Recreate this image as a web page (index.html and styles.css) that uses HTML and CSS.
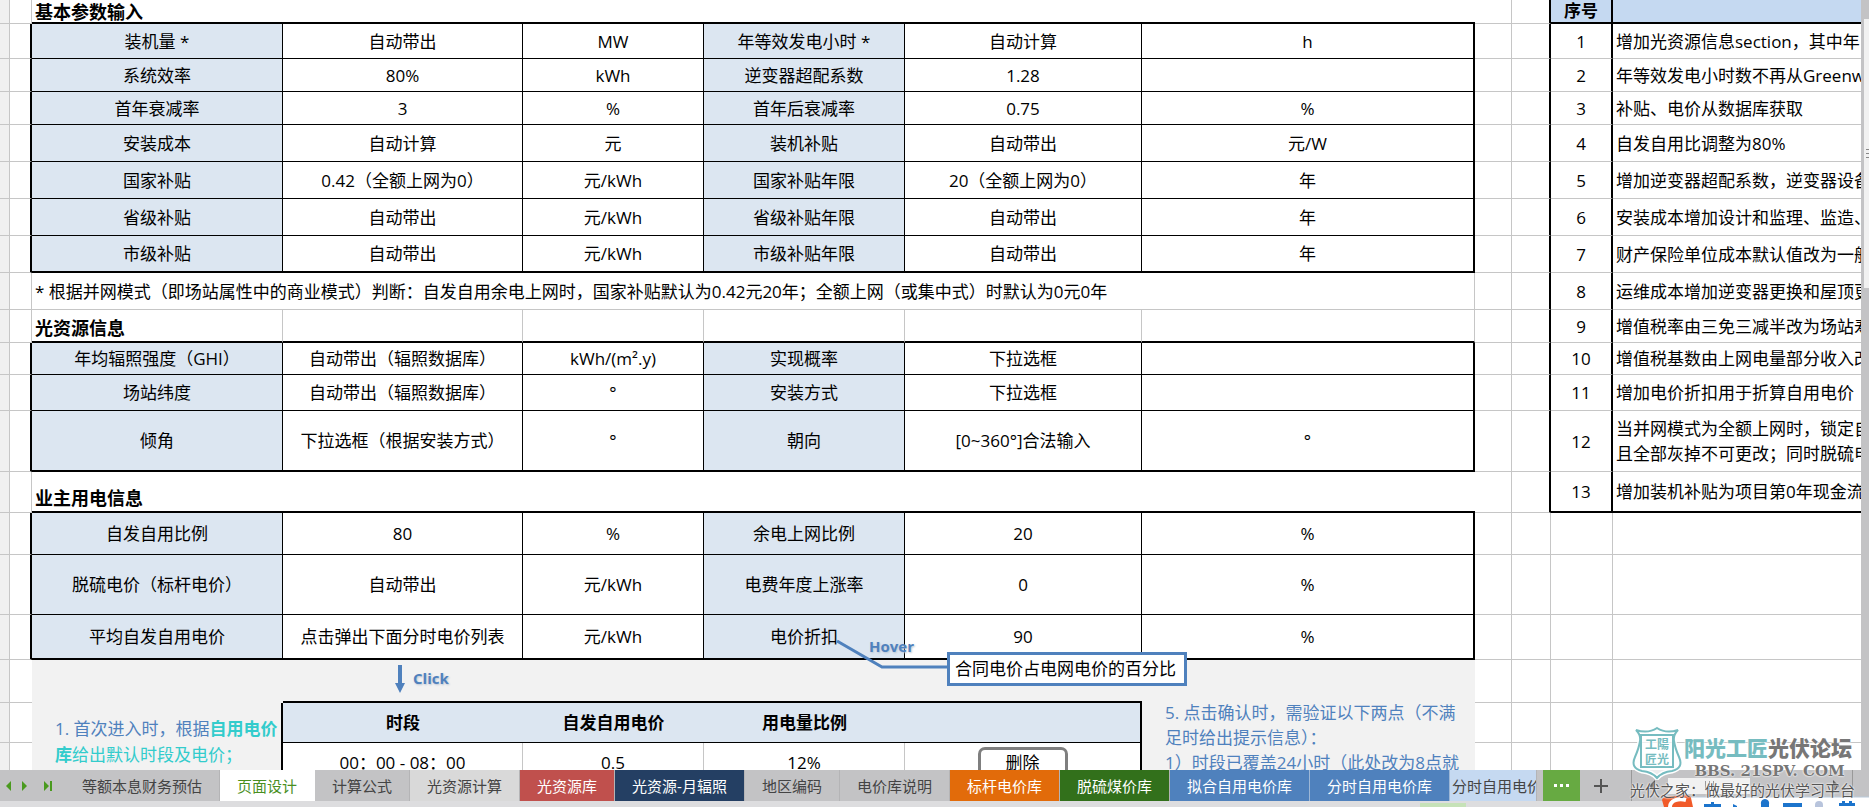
FILE: index.html
```html
<!DOCTYPE html>
<html lang="zh-CN">
<head>
<meta charset="utf-8">
<title>页面设计</title>
<link rel="stylesheet" href="styles.css">
</head>
<body>
<main class="workspace">
  <div class="sheet">
    <table class="grid">
      <colgroup>
        <col class="c-head"><col class="c-gutter"><col class="c-label"><col class="c-value"><col class="c-unit"><col class="c-label2"><col class="c-value2"><col class="c-unit2"><col class="c-gap"><col class="c-gap2"><col class="c-no"><col>
      </colgroup>
      <tbody>
        <tr class="h24 last"><td class="rh"></td><td></td><th class="title" colspan="6">基本参数输入</th><td class="gap"></td><td class="gap2"></td><th class="no list-head">序号</th><th class="txt list-head"></th></tr>
        <tr class="h35 field"><td class="rh"></td><td class="gut"></td><th class="lbl">装机量 *</th><td>自动带出</td><td>MW</td><th class="lbl">年等效发电小时 *</th><td>自动计算</td><td class="end">h</td><td class="gap"></td><td class="gap2"></td><td class="no">1</td><td class="txt">增加光资源信息section，其中年</td></tr>
        <tr class="h33 field"><td class="rh"></td><td class="gut"></td><th class="lbl">系统效率</th><td>80%</td><td>kWh</td><th class="lbl">逆变器超配系数</th><td>1.28</td><td class="end"></td><td class="gap"></td><td class="gap2"></td><td class="no">2</td><td class="txt">年等效发电小时数不再从Greenw</td></tr>
        <tr class="h33 field"><td class="rh"></td><td class="gut"></td><th class="lbl">首年衰减率</th><td>3</td><td>%</td><th class="lbl">首年后衰减率</th><td>0.75</td><td class="end">%</td><td class="gap"></td><td class="gap2"></td><td class="no">3</td><td class="txt">补贴、电价从数据库获取</td></tr>
        <tr class="h37 field"><td class="rh"></td><td class="gut"></td><th class="lbl">安装成本</th><td>自动计算</td><td>元</td><th class="lbl">装机补贴</th><td>自动带出</td><td class="end">元/W</td><td class="gap"></td><td class="gap2"></td><td class="no">4</td><td class="txt">自发自用比调整为80%</td></tr>
        <tr class="h37 field"><td class="rh"></td><td class="gut"></td><th class="lbl">国家补贴</th><td>0.42（全额上网为0）</td><td>元/kWh</td><th class="lbl">国家补贴年限</th><td>20（全额上网为0）</td><td class="end">年</td><td class="gap"></td><td class="gap2"></td><td class="no">5</td><td class="txt">增加逆变器超配系数，逆变器设备</td></tr>
        <tr class="h37 field"><td class="rh"></td><td class="gut"></td><th class="lbl">省级补贴</th><td>自动带出</td><td>元/kWh</td><th class="lbl">省级补贴年限</th><td>自动带出</td><td class="end">年</td><td class="gap"></td><td class="gap2"></td><td class="no">6</td><td class="txt">安装成本增加设计和监理、监造、</td></tr>
        <tr class="h37 field last"><td class="rh"></td><td class="gut"></td><th class="lbl">市级补贴</th><td>自动带出</td><td>元/kWh</td><th class="lbl">市级补贴年限</th><td>自动带出</td><td class="end">年</td><td class="gap"></td><td class="gap2"></td><td class="no">7</td><td class="txt">财产保险单位成本默认值改为一般</td></tr>
        <tr class="h37"><td class="rh"></td><td></td><td class="remark" colspan="6">* 根据并网模式（即场站属性中的商业模式）判断：自发自用余电上网时，国家补贴默认为0.42元20年；全额上网（或集中式）时默认为0元0年</td><td class="gap"></td><td class="gap2"></td><td class="no">8</td><td class="txt">运维成本增加逆变器更换和屋顶更</td></tr>
        <tr class="h33 last open"><td class="rh"></td><td></td><th class="title">光资源信息</th><td></td><td></td><td></td><td></td><td></td><td class="gap"></td><td class="gap2"></td><td class="no">9</td><td class="txt">增值税率由三免三减半改为场站寿</td></tr>
        <tr class="h32 field"><td class="rh"></td><td class="gut"></td><th class="lbl">年均辐照强度（GHI）</th><td>自动带出（辐照数据库）</td><td>kWh/(m².y)</td><th class="lbl">实现概率</th><td>下拉选框</td><td class="end"></td><td class="gap"></td><td class="gap2"></td><td class="no">10</td><td class="txt">增值税基数由上网电量部分收入改</td></tr>
        <tr class="h36 field"><td class="rh"></td><td class="gut"></td><th class="lbl">场站纬度</th><td>自动带出（辐照数据库）</td><td>°</td><th class="lbl">安装方式</th><td>下拉选框</td><td class="end"></td><td class="gap"></td><td class="gap2"></td><td class="no">11</td><td class="txt">增加电价折扣用于折算自用电价</td></tr>
        <tr class="h61 field last"><td class="rh"></td><td class="gut"></td><th class="lbl">倾角</th><td>下拉选框（根据安装方式）</td><td>°</td><th class="lbl">朝向</th><td>[0~360°]合法输入</td><td class="end">°</td><td class="gap"></td><td class="gap2"></td><td class="no">12</td><td class="txt">当并网模式为全额上网时，锁定自<br>且全部灰掉不可更改；同时脱硫电</td></tr>
        <tr class="h41 last list-end"><td class="rh"></td><td></td><th class="title" colspan="6">业主用电信息</th><td class="gap"></td><td class="gap2"></td><td class="no">13</td><td class="txt">增加装机补贴为项目第0年现金流</td></tr>
        <tr class="h42 field"><td class="rh"></td><td class="gut"></td><th class="lbl">自发自用比例</th><td>80</td><td>%</td><th class="lbl">余电上网比例</th><td>20</td><td class="end">%</td><td></td><td></td><td></td><td class="edge"></td></tr>
        <tr class="h60 field"><td class="rh"></td><td class="gut"></td><th class="lbl">脱硫电价（标杆电价）</th><td>自动带出</td><td>元/kWh</td><th class="lbl">电费年度上涨率</th><td>0</td><td class="end">%</td><td></td><td></td><td></td><td class="edge"></td></tr>
        <tr class="h45 field last"><td class="rh"></td><td class="gut"></td><th class="lbl">平均自发自用电价</th><td>点击弹出下面分时电价列表</td><td>元/kWh</td>
          <th class="lbl anchor">电价折扣
            <span class="callout">
              <svg class="leader" width="116" height="32" viewBox="0 0 116 32" aria-hidden="true"><path d="M2 2 47 28H114" fill="none" stroke="#4f81bd" stroke-width="3"/></svg>
              <span class="callout-name">Hover</span>
              <span class="callout-box">合同电价占电网电价的百分比</span>
            </span>
          </th>
          <td>90</td><td class="end">%</td><td></td><td></td><td></td><td class="edge"></td></tr>
        <tr class="h43"><td class="rh"></td><td class="clear"></td><td class="shade"></td>
          <td class="shade popup-top" colspan="4"><div class="click"><svg width="10" height="28" viewBox="0 0 10 28" aria-hidden="true"><path d="M3 0h4v18h3L5 28 0 18h3z" fill="#4f81bd"/></svg><span>Click</span></div></td>
          <td class="shade tips" rowspan="3">5. 点击确认时，需验证以下两点（不满<br>足时给出提示信息）：<br>1）时段已覆盖24小时（此处改为8点就</td>
          <td></td><td></td><td></td><td class="edge"></td></tr>
        <tr class="h40"><td class="rh"></td><td class="clear"></td>
          <td class="shade intro" rowspan="2">1. 首次进入时，根据<b>自用电价<br>库</b><span>给出默认时段及电价；</span></td>
          <th class="pop">时段</th><th class="pop">自发自用电价</th><th class="pop">用电量比例</th><th class="pop pop-end"></th><td></td><td></td><td></td><td class="edge"></td></tr>
        <tr class="h40"><td class="rh"></td><td class="clear"></td><td>00：00 - 08：00</td><td>0.5</td><td>12%</td><td class="pop-end"><button class="delete" type="button">删除</button></td><td></td><td></td><td></td><td class="edge"></td></tr>
      </tbody>
    </table>
  </div>
  <div class="vscroll" aria-hidden="true">
    <div class="vup"></div>
    <div class="vthumb"><i></i><i></i><i></i></div>
    <div class="vtrack"></div>
  </div>
</main>
<nav class="tabbar">
  <div class="steps">
    <button type="button" aria-label="上一个"><svg width="8" height="12" viewBox="0 0 8 12"><path d="M6 1v10L1 6z"/></svg></button>
    <button type="button" aria-label="下一个"><svg width="8" height="12" viewBox="0 0 8 12"><path d="M1 1v10l5-5z"/></svg></button>
    <button type="button" class="to-end" aria-label="最后一个"><svg width="8" height="12" viewBox="0 0 8 12"><path d="M0 1v10l5-5zM6 1h2v10H6z"/></svg></button>
  </div>
  <button type="button" class="tab">等额本息财务预估</button>
  <button type="button" class="tab active">页面设计</button>
  <button type="button" class="tab">计算公式</button>
  <button type="button" class="tab pale">光资源计算</button>
  <button type="button" class="tab red">光资源库</button>
  <button type="button" class="tab navy">光资源-月辐照</button>
  <button type="button" class="tab">地区编码</button>
  <button type="button" class="tab">电价库说明</button>
  <button type="button" class="tab orange">标杆电价库</button>
  <button type="button" class="tab green">脱硫煤价库</button>
  <button type="button" class="tab blue">拟合自用电价库</button>
  <button type="button" class="tab blue">分时自用电价库</button>
  <button type="button" class="tab sky">分时自用电价</button>
  <button type="button" class="more" aria-label="更多工作表"><i></i><i></i><i></i></button>
  <button type="button" class="add" aria-label="新建工作表"><svg width="16" height="16" viewBox="0 0 16 16"><path d="M8 1v14M1 8h14" stroke="#555" stroke-width="2"/></svg></button>
  <div class="hscroll" aria-hidden="true">
    <svg width="8" height="12" viewBox="0 0 8 12"><path d="M7 0v12L1 6z" fill="#555"/></svg>
    <div class="hthumb"><i></i><i></i><i></i></div>
    <svg width="8" height="12" viewBox="0 0 8 12"><path d="M1 0v12l6-6z" fill="#555"/></svg>
  </div>
</nav>
<footer class="status"><div class="zoom-mark"></div></footer>
<div class="ime" aria-hidden="true">
  <svg width="207" height="12" viewBox="0 0 207 12">
    <path d="M26 2H207V12H26z" fill="#fff"/><path d="M26 2H207" stroke="#b9cadb" stroke-width="1"/>
    <path d="M0 5Q0 3 3 2L25 0Q28 0 29 3L31 12H2z" fill="#f15a29"/>
    <path d="M24 5C17 3 8 5 8 12" fill="none" stroke="#fff" stroke-width="4"/>
    <g fill="#1c74cc"><path d="M49 7h3v2h7v3H42V9h7zM71 9l4 2v1h-4zM103 4a4 4 0 0 1 4 5v3h-8V9a4 4 0 0 1 4-5zM121 8h19v4h-19zM177 8h3V6h3v2h4V6h3v2h3v3h-16z"/></g>
    <path d="M157 6a4 4 0 0 1 4 4v2h-8v-2a4 4 0 0 1 4-4z" fill="#b8c4dc"/>
  </svg>
</div>
<aside class="watermark">
  <div class="mark-top">
    <svg width="54" height="54" viewBox="0 0 54 54" aria-hidden="true">
      <path d="M6 4Q18 8 27 2Q36 8 48 4Q43 9 44 15Q45 22 49 31Q54 42 42 45Q32 46 27 52Q22 46 12 45Q0 42 5 31Q9 22 10 15Q11 9 6 4z" fill="#fff" fill-opacity=".7" stroke="#fff" stroke-width="5"/>
      <path d="M6 4Q18 8 27 2Q36 8 48 4Q43 9 44 15Q45 22 49 31Q54 42 42 45Q32 46 27 52Q22 46 12 45Q0 42 5 31Q9 22 10 15Q11 9 6 4z" fill="none" stroke="#76bcc0" stroke-width="2"/>
      <path d="M11 9H43V41H11z" fill="none" stroke="#76bcc0" stroke-width="2"/>
      <text x="15" y="23">工陽</text><text x="15" y="38">匠光</text>
    </svg>
    <div class="mark-name">
      <div class="mark-cn"><span>阳光工匠</span>光伏论坛</div>
      <div class="mark-url">BBS. 21SPV. COM</div>
    </div>
  </div>
  <div class="mark-line">光伏之家：做最好的光伏学习平台</div>
</aside>
</body>
</html>
```
FILE: styles.css
```css
* { box-sizing: border-box; }

body {
  position: relative;
  display: flex;
  flex-direction: column;
  height: 100vh;
  margin: 0;
  overflow: hidden;
  background: #fff;
  color: #000;
  font: 17px/25px "Open Sans", "Noto Sans CJK SC", sans-serif;
}

button { margin: 0; padding: 0; border: 0; background: none; font: inherit; color: inherit; }

.workspace { display: flex; flex: 1; min-height: 0; }
.sheet { flex: 1; min-width: 0; overflow: hidden; }

/* grid: every cell draws its own right and bottom line */
.grid { width: 100%; table-layout: fixed; border-collapse: separate; border-spacing: 0; }
.c-head { width: 10px; }
.c-gutter { width: 22px; }
.c-label { width: 251px; }
.c-value { width: 240px; }
.c-unit { width: 181px; }
.c-label2 { width: 201px; }
.c-value2 { width: 237px; }
.c-unit2 { width: 333px; }
.c-gap { width: 37px; }
.c-gap2 { width: 39px; }
.c-no { width: 62px; }

.h24 { height: 24px; }
.h32 { height: 32px; }
.h33 { height: 33px; }
.h35 { height: 35px; }
.h36 { height: 36px; }
.h37 { height: 37px; }
.h40 { height: 40px; }
.h41 { height: 41px; }
.h42 { height: 42px; }
.h43 { height: 43px; }
.h45 { height: 45px; }
.h60 { height: 60px; }
.h61 { height: 61px; }

.grid td, .grid th {
  padding: 0;
  border: 0 solid #c6c6c6;
  border-width: 0 1px 1px 0;
  font-weight: 400;
  text-align: center;
  vertical-align: middle;
  white-space: nowrap;
}
.h24 td, .h24 th { line-height: 20px; }
.grid .rh { background: #f0f0f0; }
.grid .gut { border-right: 2px solid #000; border-bottom-color: #c6c6c6; }
.grid .lbl { background: #dce6f1; }

.field .lbl, .field .gut ~ td:nth-child(-n+8) { border-color: #000; }
.grid .end { border-right-width: 2px; }
.last .lbl, .last .gut ~ td:nth-child(-n+8), .open td:nth-child(n+4):nth-child(-n+8) { border-bottom: 2px solid #000; }

.grid .title {
  padding-left: 3px;
  border-right: 0;
  border-bottom: 2px solid #000;
  font-size: 18px;
  font-weight: 700;
  text-align: left;
  vertical-align: bottom;
}
.open .title { border-right: 1px solid #c6c6c6; }
.grid .remark { padding-left: 3px; text-align: left; }

.grid .gap2 { border-right: 2px solid #000; }
.grid .no { border-right: 2px solid #000; }
.grid .txt { padding-left: 3px; border-right: 0; overflow: hidden; text-align: left; }
.grid .edge { border-right: 0; }
.grid .list-head { border-bottom: 2px solid #000; background: #c5d9f1; font-weight: 700; }
.list-end .no, .list-end .txt { border-bottom: 2px solid #000; }

/* pop-up price list */
.grid .clear { border-right: 0; }
.grid .shade { border: 0; background: #f2f2f2; }
.grid .popup-top { border-bottom: 2px solid #000; }
.click {
  display: flex;
  align-items: center;
  gap: 8px;
  padding: 0 0 4px 112px;
  color: #4f81bd;
  font-size: 15px;
  font-weight: 700;
  text-shadow: 1px 1px 2px #b8c4d4;
}
.grid .tips { padding: 40px 0 0 23px; color: #4f81bd; text-align: left; vertical-align: top; }
.grid .intro {
  padding: 13px 0 0 23px;
  border-right: 2px solid #000;
  color: #4f81bd;
  line-height: 26px;
  text-align: left;
  vertical-align: top;
}
.intro b, .intro span { color: #33cccc; }
.grid .pop { border-right: 0; border-bottom: 1px solid #000; background: #dce6f1; font-weight: 700; }
.grid .pop-end { border-right: 2px solid #000; }
.delete {
  width: 90px;
  height: 32px;
  border: 3px solid #7f7f7f;
  border-radius: 7px;
  background: #fff;
  line-height: 24px;
  vertical-align: middle;
}

/* hover call-out over the cells */
.anchor { position: relative; }
.callout { position: absolute; z-index: 2; top: 24px; left: 131px; }
.leader { display: block; }
.callout-name {
  position: absolute;
  top: -5px;
  left: 34px;
  color: #4f81bd;
  font-size: 15px;
  font-weight: 700;
  text-shadow: 1px 1px 2px #b8c4d4;
}
.callout-box {
  position: absolute;
  top: 13px;
  left: 112px;
  padding: 1px 8px 2px 5px;
  border: 3px solid #4f81bd;
  background: #fff;
}

.vscroll { display: flex; flex-direction: column; width: 8px; border-left: 3px solid #c3c3c5; background: #c3c3c5; }
.vup { height: 19px; }
.vthumb { display: flex; flex-direction: column; align-items: flex-end; justify-content: center; gap: 3px; height: 269px; background: #f1f1f1; }
.vthumb i { width: 3px; height: 1px; background: #888; }
.vtrack { flex: 1; }

.tabbar { display: flex; height: 31px; background: #c3c3c5; color: #444; font-size: 15px; line-height: 30px; }
.steps { display: flex; flex: none; align-items: center; gap: 8px; width: 65px; padding-left: 5px; }
.steps button { display: flex; fill: #4a9a1f; }
.steps .to-end { margin-left: 7px; }
.tab { flex: none; padding: 0 17px; border-right: 1px solid #b4b4b6; white-space: nowrap; }
.tab.active { background: #fff; border-color: #fff; color: #4a8f1f; }
.tab.pale { background: #d9d9d9; }
.tab.red { background: #c0504d; color: #fff; }
.tab.navy { background: #243f63; color: #fff; }
.tab.orange { background: #e26b0a; color: #fff; }
.tab.green { background: #32701b; color: #fff; }
.tab.blue { background: #4f81bd; border-color: #9db7d6; color: #fff; }
.tab.sky { width: 87px; padding: 0 0 0 2px; overflow: hidden; background: #c5d9f1; text-align: left; }
.more { display: flex; align-items: center; justify-content: center; gap: 3px; flex: none; width: 37px; margin-left: 6px; background: #67aa42; }
.more i { width: 3px; height: 3px; background: #fff; }
.add { display: flex; align-items: center; justify-content: center; flex: none; width: 41px; }
.hscroll { display: flex; flex: 1; align-items: center; margin: 0 16px 0 10px; padding: 0 12px 0 16px; border: solid #999; border-width: 0 1px; }
.hthumb { display: flex; align-items: center; justify-content: center; gap: 3px; width: 82px; height: 16px; margin: 0 auto 0 12px; background: #f1f1f1; }
.hthumb i { width: 1px; height: 9px; background: #999; }

.status { height: 6px; background: #dddddf; }
.zoom-mark { width: 46px; height: 4px; margin: 2px 0 0 76%; background: #c6e2b8; }

.ime { position: absolute; right: 0; bottom: 0; display: flex; }

.watermark {
  position: absolute;
  right: 14px;
  bottom: 7px;
  color: #777;
  text-shadow: 0 0 2px #fff, 0 0 2px #fff;
}
.mark-top { display: flex; }
.mark-top text { fill: #76bcc0; font-size: 12px; font-weight: 700; }
.mark-name { flex: 1; padding-top: 6px; }
.mark-cn { font-size: 21px; font-weight: 900; line-height: 32px; white-space: nowrap; }
.mark-cn span { color: #76bcc0; }
.mark-url { font: 700 15px/14px "DejaVu Serif", serif; text-align: center; white-space: nowrap; }
.mark-line { color: #555; font-size: 15px; line-height: 20px; white-space: nowrap; }
```
